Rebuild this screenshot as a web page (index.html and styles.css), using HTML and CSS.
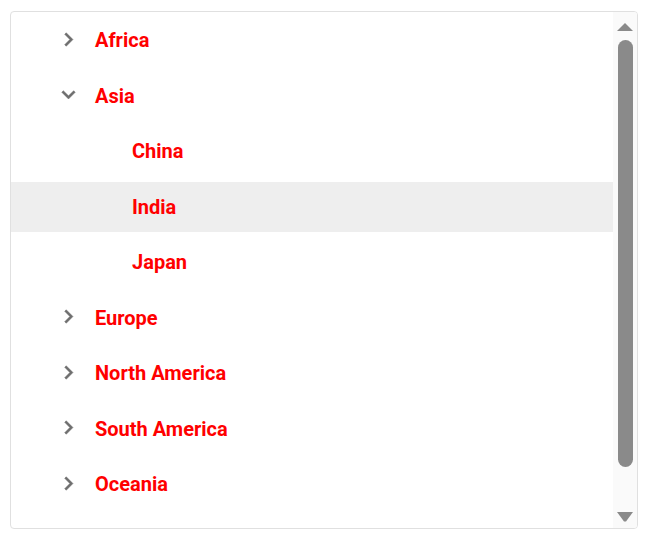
FILE: index.html
```html
<!DOCTYPE html>
<html lang="en">
<head>
<meta charset="utf-8">
<title>Tree</title>
<link rel="stylesheet" href="styles.css">
</head>
<body>
<div class="tree-box">
  <ul class="tree">
    <li class="node lvl1"><span class="toggle"><svg viewBox="0 0 24 24"><path d="M10 6L8.59 7.41 13.17 12l-4.58 4.59L10 18l6-6z"/></svg></span><span class="label">Africa</span></li>
    <li class="node lvl1"><span class="toggle"><svg viewBox="0 0 24 24"><path d="M16.59 8.59L12 13.17 7.41 8.59 6 10l6 6 6-6z"/></svg></span><span class="label">Asia</span></li>
    <li class="node lvl2"><span class="toggle"></span><span class="label">China</span></li>
    <li class="node lvl2 selected"><span class="toggle"></span><span class="label">India</span></li>
    <li class="node lvl2"><span class="toggle"></span><span class="label">Japan</span></li>
    <li class="node lvl1"><span class="toggle"><svg viewBox="0 0 24 24"><path d="M10 6L8.59 7.41 13.17 12l-4.58 4.59L10 18l6-6z"/></svg></span><span class="label">Europe</span></li>
    <li class="node lvl1"><span class="toggle"><svg viewBox="0 0 24 24"><path d="M10 6L8.59 7.41 13.17 12l-4.58 4.59L10 18l6-6z"/></svg></span><span class="label">North America</span></li>
    <li class="node lvl1"><span class="toggle"><svg viewBox="0 0 24 24"><path d="M10 6L8.59 7.41 13.17 12l-4.58 4.59L10 18l6-6z"/></svg></span><span class="label">South America</span></li>
    <li class="node lvl1"><span class="toggle"><svg viewBox="0 0 24 24"><path d="M10 6L8.59 7.41 13.17 12l-4.58 4.59L10 18l6-6z"/></svg></span><span class="label">Oceania</span></li>
  </ul>
  <div class="scrollbar">
    <svg class="arrow up" viewBox="0 0 16 8"><path d="M0 8L8 0 16 8z"/></svg>
    <div class="thumb-area"><div class="thumb"></div></div>
    <svg class="arrow down" viewBox="0 0 16 10"><path d="M0 0L16 0 9 9.5 7 9.5z"/></svg>
  </div>
</div>
</body>
</html>
```
FILE: styles.css
```css
html, body {
  margin: 0;
  background: #ffffff;
}
body {
  padding: 11px 11px 9px 10px;
  font-family: Roboto, "Noto Sans", sans-serif;
}
.tree-box {
  height: 518px;
  box-sizing: border-box;
  border: 1px solid #e0e0e0;
  border-radius: 4px;
  display: flex;
  overflow: hidden;
  background: #fff;
}
.tree {
  list-style: none;
  margin: 0;
  padding: 3px 0 0 0;
  flex: 1;
  display: flex;
  flex-direction: column;
  gap: 5.5px;
  overflow: hidden;
}
.node {
  height: 50px;
  flex: none;
  display: flex;
  align-items: center;
  padding-left: 45px;
}
.node.lvl2 {
  padding-left: 82px;
}
.node.selected {
  background: #eeeeee;
}
.toggle {
  width: 24px;
  height: 24px;
  margin-right: 15px;
  display: flex;
  align-items: center;
  justify-content: center;
}
.toggle svg {
  width: 27px;
  height: 27px;
  flex: none;
  margin-top: -2px;
  fill: #6e6e6e;
  stroke: #6e6e6e;
  stroke-width: 0.4;
}
.label {
  color: #ff0000;
  font-size: 20px;
  font-weight: 700;
}
.scrollbar {
  width: 24px;
  flex: none;
  background: #fafafa;
  display: flex;
  flex-direction: column;
  align-items: center;
  padding: 11px 0 6px 0;
  box-sizing: border-box;
}
.arrow {
  width: 16px;
  height: 8px;
  fill: #8a8a8a;
  flex: none;
}
.arrow.down {
  height: 10px;
}
.thumb-area {
  flex: 1;
  width: 100%;
  display: flex;
  justify-content: center;
  padding: 9px 0 0 0;
}
.thumb {
  width: 15px;
  height: 427px;
  background: #8a8a8a;
  border-radius: 8px;
}
```
